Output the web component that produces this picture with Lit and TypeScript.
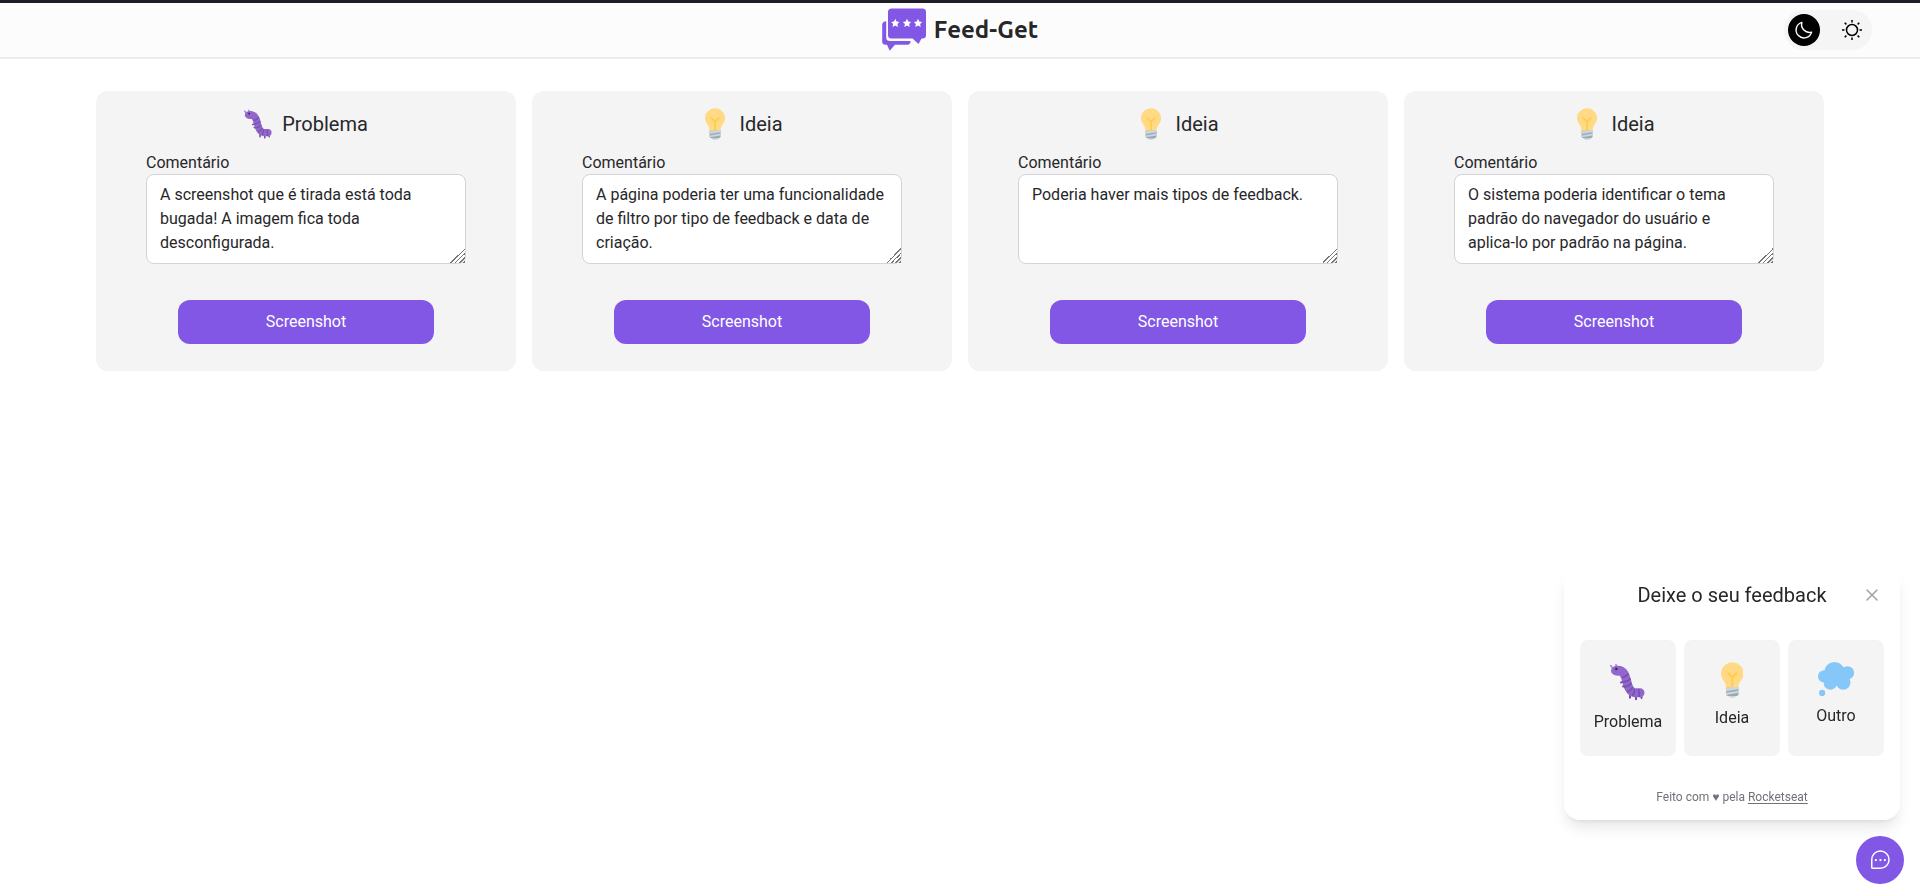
import { LitElement, html, css, svg } from "lit";
import { customElement, property, state } from "lit/decorators.js";

type Kind = "Problema" | "Ideia" | "Outro";

const bug = svg`
  <path d="M3 4.500L.8 1.800M7 3L6 .8" stroke="#aa8dd8" stroke-width="1.800" stroke-linecap="round"/>
  <path d="M11 18.500l3-1M13 22.500l3-1M20 31v2.800M26 32v3.300M31.500 31v3" stroke="#7450a8" stroke-width="2" stroke-linecap="round"/>
  <ellipse cx="7.500" cy="6.800" rx="6.500" ry="5" fill="#9266cc"/>
  <path d="M8.500 6.500C14 6.500 15.500 12 16.800 17.500C18.200 23.500 20 28.500 25 28.700H30" fill="none" stroke="#9266cc" stroke-width="9" stroke-linecap="round"/>
  <path d="M12.500 13.500Q16.500 12.500 18.500 9.500M12.600 18Q17 18 20.500 14.500M14 23Q18.500 22.500 21.500 19M17 28Q20.500 27 22.800 23.500M22.500 32Q24.500 28.500 24.500 25M29 33Q30 29.500 28.500 25" stroke="#7450a8" stroke-width="1.500" fill="none"/>
  <circle cx="6.300" cy="5" r="1.200" fill="#292f33"/>`;

const bulb = svg`
  <path d="M22 11.060c0 6.440-5 7.440-5 13.440 0 3.100-3.340 3.500-5.500 3.500-2.050 0-6.590-.780-6.590-3.500C4.910 18.500 0 17.500 0 11.060 0 5.030 5.290.140 11.080.140 16.880.140 22 5.030 22 11.060z" fill="#ffd983"/>
  <path d="M15.170 32.500c0 .830-2.240 2.500-4.170 2.500s-4.170-1.670-4.170-2.500 2.240-.500 4.170-.500 4.170-.330 4.170.500z" fill="#ccd6dd"/>
  <path d="M15.700 10.300a1 1 0 0 0-1.410 0L11 13.590 7.710 10.300a1 1 0 0 0-1.410 1.410L10 15.410V26a1 1 0 1 0 2 0V15.410l3.710-3.700a1 1 0 0 0-.010-1.410z" fill="#ffcc4d"/>
  <path d="M17 31a2 2 0 0 1-2 2H7a2 2 0 0 1-2-2v-6h12v6z" fill="#99aab5"/>
  <path d="M5 32l12-2v-2L5 30v2zm0-3.500l12-2v-2.200H11L5 25.500v3z" fill="#ccd6dd"/>`;

const cloud = svg`
  <g fill="#85c7f8"><circle cx="16" cy="10" r="10"/><circle cx="28.500" cy="10.500" r="6.500"/><circle cx="6" cy="14" r="6"/><circle cx="12" cy="20.500" r="6.500"/><circle cx="24.500" cy="20" r="7"/><circle cx="19" cy="14" r="9"/><circle cx="4" cy="30" r="3"/></g>`;

@customElement("kind-icon")
class KindIcon extends LitElement {
  @property() kind: Kind = "Problema";
  static styles = css`
    :host { display: flex; justify-content: center; height: var(--icon-size, 36px); }
    svg { display: block; height: 100%; width: auto; flex: none; }
  `;
  render() {
    if (this.kind === "Problema") return html`<svg viewBox="0 -2 36 40" aria-hidden="true">${bug}</svg>`;
    if (this.kind === "Ideia") return html`<svg viewBox="0 0 22 35" aria-hidden="true">${bulb}</svg>`;
    return html`<svg viewBox="0 0 35 33" aria-hidden="true">${cloud}</svg>`;
  }
}

@customElement("feedback-card")
class FeedbackCard extends LitElement {
  @property() kind: Kind = "Problema";
  @property() comment = "";
  static styles = css`
    :host { display: flex; flex-direction: column; align-items: center; background: #f4f4f5; border-radius: 12px; padding: 16px 24px 27px; }
    .title { display: flex; align-items: center; gap: 10px; height: 34px; margin: 0 0 10px; font-size: 20px; line-height: 28px; font-weight: 400; }
    .icon { width: 28px; --icon-size: 32px; }
    .field { display: flex; flex-direction: column; width: 100%; max-width: 320px; }
    label { line-height: 23px; }
    textarea { box-sizing: border-box; width: 100%; height: 90px; padding: 8px 13px; border: 1px solid #d4d4d8; border-radius: 8px; background: #fff; color: #27272a; font: inherit; display: block; overflow: auto; }
    textarea::-webkit-scrollbar { width: 12px; height: 12px; }
    textarea::-webkit-resizer { background: linear-gradient(135deg, transparent 50%, #777 50% 56%, transparent 56% 64%, #777 64% 70%, transparent 70% 78%, #777 78% 84%, transparent 84% 91%, #777 91%); }
    button { width: 100%; max-width: 256px; height: 44px; margin-top: 36px; border: 0; border-radius: 12px; background: #8257e5; color: #fff; font: inherit; cursor: pointer; }
  `;
  render() {
    return html`
      <h2 class="title"><kind-icon class="icon" .kind=${this.kind}></kind-icon>${this.kind}</h2>
      <div class="field">
        <label for="comment">Comentário</label>
        <textarea id="comment" .value=${this.comment}></textarea>
      </div>
      <button type="button">Screenshot</button>`;
  }
}

@customElement("feedback-widget")
class FeedbackWidget extends LitElement {
  @state() open = true;
  static styles = css`
    :host { position: fixed; right: 16px; bottom: 12px; display: flex; flex-direction: column; align-items: flex-end; gap: 16px; }
    button { font: inherit; color: inherit; border: 0; padding: 0; cursor: pointer; }
    .panel { margin-right: 4px; padding: 16px 16px 14px; border-radius: 16px; background: #fff; box-shadow: 0 10px 15px -3px rgba(0,0,0,.1), 0 4px 6px -4px rgba(0,0,0,.1); display: flex; flex-direction: column; align-items: center; }
    .head { align-self: stretch; display: grid; grid-template-columns: 24px 1fr 24px; align-items: center; }
    .title { grid-column: 2; margin: 0; text-align: center; font-size: 20px; line-height: 26px; font-weight: 400; }
    .close { background: none; color: #a1a1aa; display: flex; justify-content: center; }
    .kinds { display: flex; gap: 8px; padding: 32px 0; }
    .kind { width: 96px; height: 116px; padding: 22px 0 0; border-radius: 8px; background: #f4f4f5; display: flex; flex-direction: column; align-items: center; justify-content: flex-start; gap: 8px; }
    .worm { --icon-size: 40px; }
    .bulb { --icon-size: 36px; }
    .cloud { --icon-size: 34px; }
    .foot { font-size: 12px; line-height: 18px; color: #71717a; }
    .foot a { color: inherit; text-decoration: underline; text-underline-offset: 2px; }
    .fab { width: 48px; height: 48px; border-radius: 24px; background: #8257e5; color: #fff; display: grid; place-items: center; }
  `;
  render() {
    return html`
      ${this.open ? html`<section class="panel">
        <header class="head">
          <h2 class="title">Deixe o seu feedback</h2>
          <button class="close" type="button" aria-label="Fechar" @click=${() => (this.open = false)}>
            <svg width="16" height="16" viewBox="0 0 16 16" fill="none" stroke="currentColor" stroke-width="1.500" stroke-linecap="round"><path d="M3 3L13 13M13 3L3 13"/></svg>
          </button>
        </header>
        <div class="kinds">
          <button class="kind" type="button"><kind-icon class="worm" kind="Problema"></kind-icon>Problema</button>
          <button class="kind" type="button"><kind-icon class="bulb" kind="Ideia"></kind-icon>Ideia</button>
          <button class="kind" type="button"><kind-icon class="cloud" kind="Outro"></kind-icon>Outro</button>
        </div>
        <footer class="foot">Feito com ♥ pela <a href="https://rocketseat.com.br">Rocketseat</a></footer>
      </section>` : ""}
      <button class="fab" type="button" aria-label="Feedback" @click=${() => (this.open = !this.open)}>
        <svg width="24" height="24" viewBox="0 0 256 256" fill="none" stroke="currentColor" stroke-width="16" stroke-linejoin="round"><path d="M132 216H47.700a7.600 7.600 0 0 1-7.700-7.700V124a92 92 0 0 1 92-92 92 92 0 0 1 92 92 92 92 0 0 1-92 92Z"/><g fill="currentColor" stroke="none"><circle cx="132" cy="128" r="12"/><circle cx="84" cy="128" r="12"/><circle cx="180" cy="128" r="12"/></g></svg>
      </button>`;
  }
}

const star = (x: number) => svg`<path transform="translate(${x} 15)" fill="#fff" d="M0-4.300L1.300-1.400L4.200-1.100L2.100.900L2.700 3.900L0 2.400L-2.700 3.900L-2.100.900L-4.200-1.100L-1.300-1.400Z"/>`;

@customElement("app-root")
class AppRoot extends LitElement {
  @state() cards: { kind: Kind; comment: string }[] = [
    { kind: "Problema", comment: "A screenshot que é tirada está toda bugada! A imagem fica toda desconfigurada." },
    { kind: "Ideia", comment: "A página poderia ter uma funcionalidade de filtro por tipo de feedback e data de criação." },
    { kind: "Ideia", comment: "Poderia haver mais tipos de feedback." },
    { kind: "Ideia", comment: "O sistema poderia identificar o tema padrão do navegador do usuário e aplica-lo por padrão na página." },
  ];
  static styles = css`
    :host { display: block; min-height: 100vh; background: #fff; color: #27272a; font: 16px/24px Roboto, sans-serif; }
    .bar { display: grid; grid-template-columns: 1fr auto 1fr; align-items: center; height: 54px; padding: 0 48px; border-top: 3px solid #1f1c26; border-bottom: 2px solid #ececec; background: #fcfcfc; }
    .brand { grid-column: 2; display: flex; align-items: center; gap: 8px; margin: 0; font: 700 24px/32px Ubuntu, "Noto Sans", sans-serif; }
    .brand svg { display: block; }
    .themes { justify-self: end; display: flex; gap: 16px; padding: 4px; border-radius: 20px; background: #f5f5f5; }
    .theme { width: 32px; height: 32px; padding: 0; border: 0; border-radius: 16px; background: none; color: #000; display: grid; place-items: center; cursor: pointer; }
    .active { background: #000; color: #fff; }
    .cards { display: grid; grid-template-columns: repeat(4, 1fr); gap: 16px; padding: 32px 96px; }
  `;
  render() {
    return html`
      <header class="bar">
        <h1 class="brand">
          <svg width="44" height="44" viewBox="0 0 44 44" aria-hidden="true">
            <path fill="#8257e5" d="M4.200 13.300V29.500Q4.200 33 8 33H28.500V34Q28 36.800 25.500 36.800H13L7.700 42.800L5 36.800H3.500Q.2 36.800 .2 33.500V17Q.2 13.500 4.200 13.300Z"/>
            <path fill="#8257e5" d="M9.500 .4H40.500Q44 .4 44 4V27Q44 30.600 40.500 30.600H39.500L36.500 36L30.500 30.600H9.500Q6 30.600 6 27V4Q6 .4 9.500 .4Z"/>
            ${star(13.3)}${star(25)}${star(36)}
          </svg>
          Feed-Get
        </h1>
        <div class="themes">
          <button class="theme active" type="button" aria-label="Tema escuro"><svg width="22" height="22" viewBox="0 0 256 256" fill="none" stroke="currentColor" stroke-width="16" stroke-linecap="round" stroke-linejoin="round"><path d="M216.700 152.600A91.900 91.900 0 0 1 103.400 39.300a92 92 0 1 0 113.300 113.300Z"/></svg></button>
          <button class="theme" type="button" aria-label="Tema claro"><svg width="24" height="24" viewBox="0 0 24 24" fill="none" stroke="currentColor" stroke-width="1.500"><circle cx="12" cy="12" r="5.500"/><path d="M12 2v2.500M12 19.500V22M2 12h2.500M19.500 12H22M4.700 4.700l1.700 1.700M17.600 17.600l1.700 1.700M4.700 19.300l1.700-1.700M17.600 6.400l1.700-1.700"/></svg></button>
        </div>
      </header>
      <main class="cards">
        ${this.cards.map((c) => html`<feedback-card .kind=${c.kind} .comment=${c.comment}></feedback-card>`)}
      </main>
      <feedback-widget></feedback-widget>`;
  }
}
